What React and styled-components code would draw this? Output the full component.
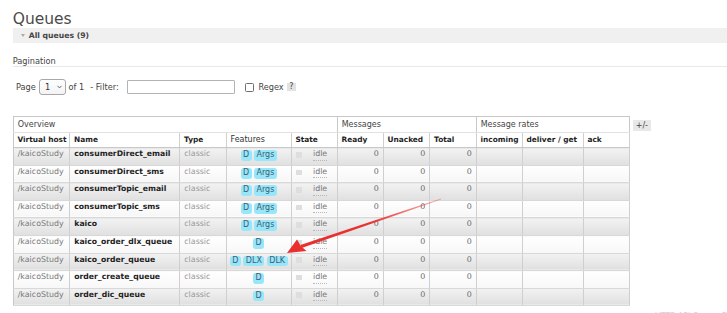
import React from 'react';
import styled, { createGlobalStyle } from 'styled-components';

const GlobalStyle = createGlobalStyle`
  html, body { margin: 0; padding: 0; background: #fff; }
  body {
    font-family: "DejaVu Sans", Verdana, sans-serif;
    font-size: 8px;
    color: #444;
    overflow: hidden;
  }
`;

const Page = styled.div`
  position: relative;
  width: 727px;
  height: 313px;
  overflow: hidden;
  padding-left: 12.7px;
  box-sizing: border-box;
`;

const Title = styled.h1`
  margin: 0;
  padding-top: 11px;
  font-size: 15.5px;
  line-height: 16px;
  font-weight: normal;
  color: #4a4a4a;
`;

const SectionBar = styled.div`
  margin-top: 1px;
  height: 15px;
  background: #f0f0f0;
  display: flex;
  align-items: center;
  gap: 4px;
  padding-left: 8px;
  font-weight: bold;
  font-size: 7.7px;
  color: #444;
`;

const Caret = styled.span`
  width: 0;
  height: 0;
  border-left: 2.3px solid transparent;
  border-right: 2.3px solid transparent;
  border-top: 3.5px solid #aaa;
`;

const SubHeading = styled.h3`
  margin: 13px 0 0;
  font-size: 8.2px;
  line-height: 10px;
  font-weight: normal;
  color: #444;
  border-bottom: 1px solid #e8e8e8;
`;

const Controls = styled.div`
  display: flex;
  align-items: center;
  height: 16px;
  margin-top: 12px;
  padding-left: 3.3px;
  font-size: 8.2px;
  color: #444;
`;

const Label = styled.span`
  margin-left: ${p => p.$gap || 0}px;
  white-space: pre;
`;

const SelectBox = styled.div`
  margin-left: 3.3px;
  width: 26.7px;
  height: 16px;
  box-sizing: border-box;
  border: 1px solid #a8a8a8;
  border-radius: 3px;
  background: linear-gradient(#ffffff, #f3f3f3);
  display: flex;
  align-items: center;
  padding-left: 4.8px;
  gap: 7px;
  color: #333;
`;

const TextInput = styled.div`
  margin-left: auto;
  width: 108.4px;
  height: 14px;
  box-sizing: border-box;
  border: 1px solid #b4b4b4;
  border-radius: 1px;
  background: #fff;
`;

const FilterGroup = styled.div`
  display: flex;
  align-items: center;
  width: 166.6px;
  margin-left: 2.7px;
`;

const CheckBox = styled.span`
  margin-left: 10.3px;
  width: 9px;
  height: 9px;
  box-sizing: border-box;
  border: 1px solid #6e6e6e;
  border-radius: 1.5px;
  background: #fff;
`;

const Help = styled.span`
  margin-left: 3px;
  width: 9.4px;
  height: 8.6px;
  background: #e2e2e2;
  color: #444;
  font-size: 8px;
  line-height: 8.6px;
  text-align: center;
`;

const TableArea = styled.div`
  display: flex;
  align-items: flex-start;
  margin-top: 21px;
`;

const Table = styled.table`
  border-collapse: collapse;
  table-layout: fixed;
  width: 616.3px;
  border: 1px solid #c8c8c8;
`;

const GroupRow = styled.tr`
  height: 15.7px;
`;

const HeadRow = styled.tr`
  height: 15.6px;
`;

const GroupTh = styled.th`
  padding: 0 4px;
  text-align: left;
  font-weight: normal;
  font-size: 8px;
  color: #444;
  background: #fff;
  border-right: 1px solid #c8c8c8;
  border-bottom: 1px solid #e2e2e2;
  white-space: nowrap;
`;

const ColTh = styled.th`
  padding: 0 3.8px;
  text-align: left;
  font-weight: ${p => (p.$light ? 'normal' : 'bold')};
  font-size: ${p => (p.$light ? '8px' : '7.4px')};
  color: ${p => (p.$light ? '#333' : '#1e1e1e')};
  background: #fff;
  border-right: 1px solid #d0d0d0;
  border-bottom: 1px solid #c8c8c8;
  white-space: nowrap;
  overflow: hidden;
`;

const DataRow = styled.tr`
  height: 17.55px;
`;

const Cell = styled.td`
  padding: 1px 4px 0;
  vertical-align: top;
  line-height: 10px;
  white-space: nowrap;
  overflow: hidden;
  border-right: 1px solid #cfcfcf;
  border-bottom: 1px solid #d8d8d8;
  font-size: ${p => (p.$bold ? '7.7px' : '7.9px')};
  color: ${p => p.$color || '#808080'};
  font-weight: ${p => (p.$bold ? 'bold' : 'normal')};
  text-align: ${p => p.$align || 'left'};
  background: ${p =>
    p.$alt
      ? 'linear-gradient(#f2f2f2, #e0e0e0)'
      : 'linear-gradient(#ffffff, #f7f7f7)'};
`;

const FeatureCell = styled(Cell)`
  padding: 1px 1px 0;
`;

const Badges = styled.div`
  display: flex;
  justify-content: center;
  gap: 2.6px;
  margin-top: 1px;
`;

const Badge = styled.span`
  display: inline-block;
  height: 10.7px;
  line-height: 10.7px;
  padding: 0 2.4px;
  border-radius: 3px;
  background: #98e6fa;
  color: #3d5f73;
  font-size: 8px;
`;

const StateWrap = styled.div`
  display: flex;
  align-items: flex-start;
`;

const StateDot = styled.span`
  margin-top: 2.7px;
  width: 6.3px;
  height: 5.7px;
  background: #dedede;
`;

const StateText = styled.span`
  margin-left: 11px;
  color: #777;
  border-bottom: 1px dotted #b8b8b8;
  line-height: 10.5px;
`;

const Toggle = styled.span`
  margin-left: 2.7px;
  margin-top: 4px;
  width: 18.3px;
  height: 11px;
  line-height: 11px;
  background: #e8e8e8;
  color: #444;
  font-size: 8px;
  text-align: center;
`;

const Footer = styled.div`
  margin-top: 6px;
  padding-left: 642px;
  color: #d4d4d4;
  white-space: nowrap;
  font-size: 8px;
  line-height: 10px;
`;

const ArrowLayer = styled.svg`
  position: absolute;
  left: 0;
  top: 0;
  pointer-events: none;
`;

const queues = [
  { name: 'consumerDirect_email', features: ['D', 'Args'] },
  { name: 'consumerDirect_sms', features: ['D', 'Args'] },
  { name: 'consumerTopic_email', features: ['D', 'Args'] },
  { name: 'consumerTopic_sms', features: ['D', 'Args'] },
  { name: 'kaico', features: ['D', 'Args'] },
  { name: 'kaico_order_dlx_queue', features: ['D'] },
  { name: 'kaico_order_queue', features: ['D', 'DLX', 'DLK'] },
  { name: 'order_create_queue', features: ['D'] },
  { name: 'order_dic_queue', features: ['D'] },
];

const colWidths = [56.6, 110, 46.4, 65, 46, 46, 46.6, 46.4, 46, 61, 46.3];

function Chevron() {
  return (
    <svg width="5" height="4" viewBox="0 0 5 4">
      <path d="M0.5 0.8 L2.5 2.9 L4.5 0.8" fill="none" stroke="#555" strokeWidth="0.9" />
    </svg>
  );
}

function Arrow() {
  return (
    <ArrowLayer width="727" height="313" viewBox="0 0 727 313">
      <defs>
        <linearGradient id="fade" gradientUnits="userSpaceOnUse" x1="441" y1="199" x2="370" y2="224">
          <stop offset="0" stopColor="#ef3b3b" stopOpacity="0.35" />
          <stop offset="1" stopColor="#ea2f2f" stopOpacity="1" />
        </linearGradient>
      </defs>
      <polygon
        points="441.1,199.4 440.9,198.6 300.4,245.0 301.6,248.0"
        fill="url(#fade)"
      />
      <polygon points="287,253 297,239.5 301,246.3 306.5,251" fill="#ea2f2f" />
    </ArrowLayer>
  );
}

export default function App() {
  return (
    <Page>
      <GlobalStyle />
      <Title>Queues</Title>
      <SectionBar>
        <Caret />
        <span>All queues (9)</span>
      </SectionBar>
      <SubHeading>Pagination</SubHeading>
      <Controls>
        <Label>Page</Label>
        <SelectBox>
          <span>1</span>
          <Chevron />
        </SelectBox>
        <FilterGroup>
          <Label>of 1</Label>
          <Label $gap={6}>- Filter:</Label>
          <TextInput />
        </FilterGroup>
        <CheckBox />
        <Label $gap={4}>Regex</Label>
        <Help>?</Help>
      </Controls>
      <TableArea>
        <Table>
          <colgroup>
            {colWidths.map((w, i) => (
              <col key={i} style={{ width: `${w}px` }} />
            ))}
          </colgroup>
          <thead>
            <GroupRow>
              <GroupTh colSpan={5}>Overview</GroupTh>
              <GroupTh colSpan={3}>Messages</GroupTh>
              <GroupTh colSpan={3}>Message rates</GroupTh>
            </GroupRow>
            <HeadRow>
              <ColTh>Virtual host</ColTh>
              <ColTh>Name</ColTh>
              <ColTh>Type</ColTh>
              <ColTh $light>Features</ColTh>
              <ColTh>State</ColTh>
              <ColTh>Ready</ColTh>
              <ColTh>Unacked</ColTh>
              <ColTh>Total</ColTh>
              <ColTh>incoming</ColTh>
              <ColTh>deliver / get</ColTh>
              <ColTh>ack</ColTh>
            </HeadRow>
          </thead>
          <tbody>
            {queues.map((q, i) => {
              const alt = i % 2 === 0;
              return (
                <DataRow key={q.name}>
                  <Cell $alt={alt} $color="#7a7a7a">/kaicoStudy</Cell>
                  <Cell $alt={alt} $bold $color="#1e1e1e">{q.name}</Cell>
                  <Cell $alt={alt} $color="#999">classic</Cell>
                  <FeatureCell $alt={alt}>
                    <Badges>
                      {q.features.map(f => (
                        <Badge key={f}>{f}</Badge>
                      ))}
                    </Badges>
                  </FeatureCell>
                  <Cell $alt={alt}>
                    <StateWrap>
                      <StateDot />
                      <StateText>idle</StateText>
                    </StateWrap>
                  </Cell>
                  <Cell $alt={alt} $align="right" $color="#666">0</Cell>
                  <Cell $alt={alt} $align="right" $color="#666">0</Cell>
                  <Cell $alt={alt} $align="right" $color="#666">0</Cell>
                  <Cell $alt={alt} />
                  <Cell $alt={alt} />
                  <Cell $alt={alt} />
                </DataRow>
              );
            })}
          </tbody>
        </Table>
        <Toggle>+/-</Toggle>
      </TableArea>
      <Footer>HTTP API   Server Docs   Tutorials</Footer>
      <Arrow />
    </Page>
  );
}
